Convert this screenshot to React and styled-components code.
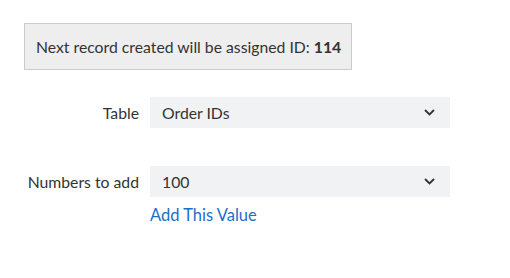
import styled, { createGlobalStyle } from "styled-components";

const GlobalStyle = createGlobalStyle`
  body {
    margin: 0;
    background: #fff;
    font-family: Lato, "Open Sans", sans-serif;
    color: #333;
  }
`;

const Page = styled.div`
  padding: 23px 24px;
`;

const Notice = styled.div`
  display: inline-flex;
  align-items: center;
  box-sizing: border-box;
  height: 47px;
  padding: 0 10px 0 11px;
  background: #eeeeee;
  border: 1px solid #cccccc;
  font-size: 15.75px;
  color: #333;

  b {
    font-weight: 700;
    margin-left: 4px;
  }
`;

const Form = styled.div`
  display: grid;
  grid-template-columns: 115px 300px;
  column-gap: 11px;
  margin-top: 27px;
  align-items: center;
`;

const Label = styled.div`
  text-align: right;
  font-size: 15.75px;
  color: #333;
  margin-top: ${(p) => p.$offset || 0}px;
`;

const Select = styled.div`
  display: flex;
  align-items: center;
  justify-content: space-between;
  box-sizing: border-box;
  height: 31px;
  padding: 0 15px 0 12px;
  background: #f1f2f4;
  font-size: 15.75px;
  color: #333;
  margin-top: ${(p) => p.$offset || 0}px;
`;

const Link = styled.a`
  grid-column: 2;
  color: #1d6fc7;
  font-size: 16.5px;
  text-decoration: none;
  margin-top: 8px;
  cursor: pointer;
`;

const Chevron = () => (
  <svg width="11" height="7" viewBox="0 0 11 7">
    <path d="M1 1l4.5 4.5L10 1" fill="none" stroke="#333" strokeWidth="1.8" />
  </svg>
);

export default function App() {
  return (
    <>
      <GlobalStyle />
      <Page>
        <Notice>
          Next record created will be assigned ID: <b>114</b>
        </Notice>
        <Form>
          <Label>Table</Label>
          <Select>
            Order IDs
            <Chevron />
          </Select>
          <Label $offset={38}>Numbers to add</Label>
          <Select $offset={38}>
            100
            <Chevron />
          </Select>
          <Link>Add This Value</Link>
        </Form>
      </Page>
    </>
  );
}
